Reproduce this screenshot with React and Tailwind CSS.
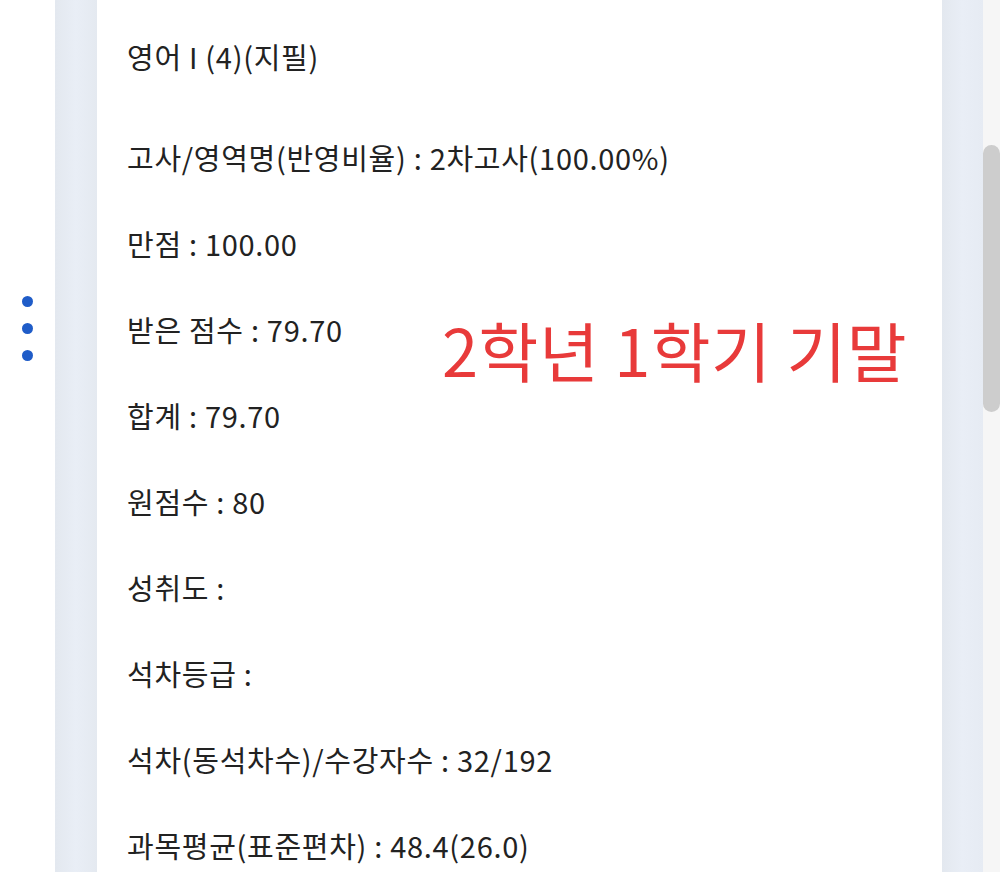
export default function App() {
  const rows = [
    '만점 : 100.00',
    '받은 점수 : 79.70',
    '합계 : 79.70',
    '원점수 : 80',
    '성취도 :',
    '석차등급 :',
    '석차(동석차수)/수강자수 : 32/192',
    '과목평균(표준편차) : 48.4(26.0)',
  ];

  return (
    <div
      className="relative flex h-[872px] w-[1000px] overflow-hidden bg-white text-[#222]"
      style={{ fontFamily: '"Noto Sans CJK KR", "Noto Sans", sans-serif' }}
    >
      {/* left rail with menu dots */}
      <div className="flex w-[55px] shrink-0 flex-col items-center gap-[16px] pt-[296px] pr-[1px]">
        <span className="h-[11px] w-[11px] rounded-full bg-[#1f5cc8]" />
        <span className="h-[11px] w-[11px] rounded-full bg-[#1f5cc8]" />
        <span className="h-[11px] w-[11px] rounded-full bg-[#1f5cc8]" />
      </div>

      <div className="w-[42px] shrink-0 bg-gradient-to-r from-[#e3e8ef] via-[#e9eef6] to-[#e4e9f0]" />

      {/* card */}
      <div className="w-[845px] shrink-0 bg-white pl-[30px] pt-[35px] text-[29px] leading-[42px] tracking-[0.7px]">
        <p>영어 I (4)(지필)</p>
        <p className="mt-[59px]">고사/영역명(반영비율) : 2차고사(100.00%)</p>
        {rows.map((r) => (
          <p key={r} className="mt-[44px]">
            {r}
          </p>
        ))}
      </div>

      <div className="w-[41px] shrink-0 bg-gradient-to-r from-[#e3e8ef] via-[#e9eef6] to-[#e6ebf3]" />

      {/* scrollbar */}
      <div className="w-[17px] shrink-0 bg-[#f6f6f6] pt-[145px]">
        <div className="h-[267px] w-[17px] rounded-full bg-[#cdcdcd]" />
      </div>

      {/* red annotation overlay */}
      <div className="absolute left-[442px] top-[309px] text-[65px] leading-[80px] tracking-[0.5px] text-[#e83a3a]">
        2학년 1학기 기말
      </div>
    </div>
  );
}
